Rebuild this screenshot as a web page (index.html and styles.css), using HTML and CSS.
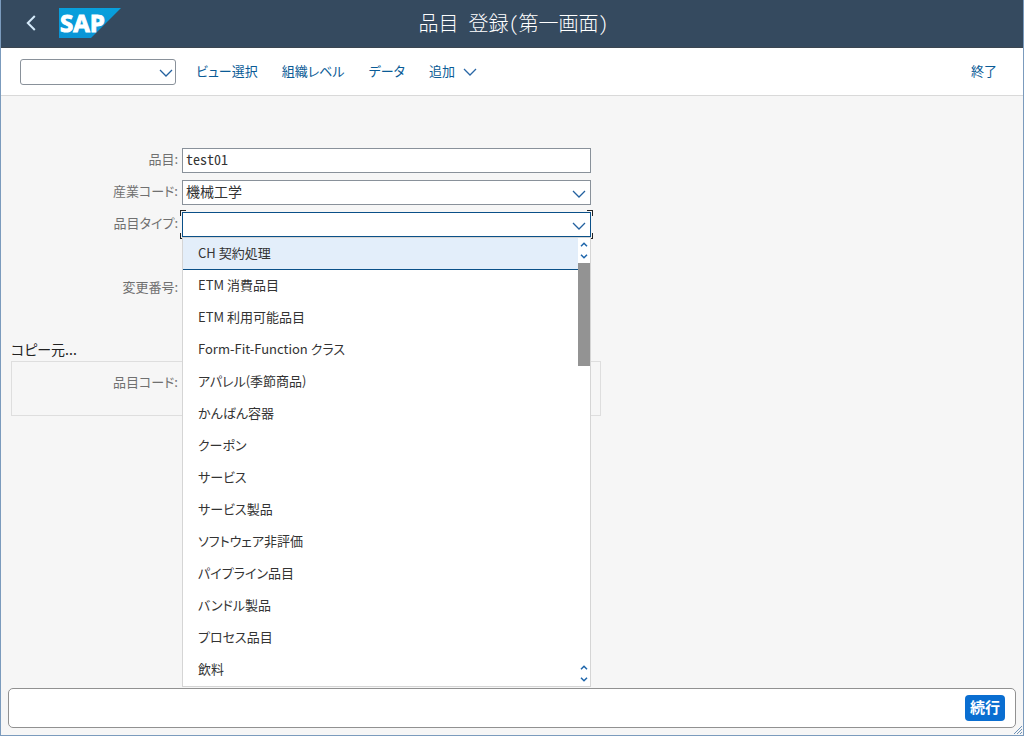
FILE: index.html
```html
<!DOCTYPE html>
<html lang="ja">
<head>
<meta charset="utf-8">
<meta name="viewport" content="width=device-width, initial-scale=1">
<title>品目 登録(第一画面)</title>
<link rel="stylesheet" href="styles.css">
</head>
<body>
<svg class="defs" aria-hidden="true">
  <symbol id="chevron-down" viewBox="0 0 14 8"><path d="M1 1L7 7L13 1"/></symbol>
  <symbol id="arrow-up" viewBox="0 0 8 5"><path d="M1 4.2L4 1.2L7 4.2"/></symbol>
  <symbol id="arrow-down" viewBox="0 0 8 5"><path d="M1 0.8L4 3.8L7 0.8"/></symbol>
</svg>
<header class="shell">
  <button class="back" type="button" aria-label="戻る">
    <svg width="10" height="16" viewBox="0 0 10 16"><path d="M8.8 1L1.8 8L8.8 15"/></svg>
  </button>
  <svg class="logo" width="62" height="30" viewBox="0 0 62 30" role="img" aria-label="SAP">
    <defs><linearGradient id="logo-fill" x1="0" y1="0" x2="0" y2="1"><stop offset="0" stop-color="#08a0dc"/><stop offset="1" stop-color="#0a94d6"/></linearGradient></defs>
    <path d="M0 0H62L32 30H0Z" fill="url(#logo-fill)"/>
    <text class="logo-text" x="1" y="24">SAP</text>
  </svg>
  <h1 class="title">品目 登録(第一画面)</h1>
</header>
<nav class="toolbar">
  <div class="combo command">
    <select class="field" aria-label="コマンド"><option></option></select>
    <svg class="chevron"><use href="#chevron-down"/></svg>
  </div>
  <button class="action" type="button">ビュー選択</button>
  <button class="action" type="button">組織レベル</button>
  <button class="action" type="button">データ</button>
  <button class="action" type="button">追加<svg class="menu-chevron"><use href="#chevron-down"/></svg></button>
  <button class="action exit" type="button">終了</button>
</nav>
<main class="content">
  <form class="form">
    <div class="row">
      <label class="label" for="material">品目:</label>
      <input class="field half" id="material" type="text" value="test01">
    </div>
    <div class="row">
      <label class="label" for="industry">産業コード:</label>
      <div class="combo">
        <select class="field" id="industry"><option>機械工学</option></select>
        <svg class="chevron"><use href="#chevron-down"/></svg>
      </div>
    </div>
    <div class="row">
      <label class="label" for="type">品目タイプ:</label>
      <div class="combo open">
        <select class="field" id="type"><option></option></select>
        <svg class="chevron"><use href="#chevron-down"/></svg>
        <div class="popup">
          <ul class="options" role="listbox" aria-label="品目タイプ">
            <li class="option selected" role="option" aria-selected="true">CH 契約処理</li>
            <li class="option" role="option">ETM 消費品目</li>
            <li class="option" role="option">ETM 利用可能品目</li>
            <li class="option" role="option">Form-Fit-Function クラス</li>
            <li class="option" role="option">アパレル(季節商品)</li>
            <li class="option" role="option">かんばん容器</li>
            <li class="option" role="option">クーポン</li>
            <li class="option" role="option">サービス</li>
            <li class="option" role="option">サービス製品</li>
            <li class="option" role="option">ソフトウェア非評価</li>
            <li class="option" role="option">パイプライン品目</li>
            <li class="option" role="option">バンドル製品</li>
            <li class="option" role="option">プロセス品目</li>
            <li class="option" role="option">飲料</li>
          </ul>
          <div class="scrollbar">
            <div class="arrows"><svg class="arrow"><use href="#arrow-up"/></svg><svg class="arrow"><use href="#arrow-down"/></svg></div>
            <div class="track"><div class="thumb"></div></div>
            <div class="arrows"><svg class="arrow"><use href="#arrow-up"/></svg><svg class="arrow"><use href="#arrow-down"/></svg></div>
          </div>
        </div>
      </div>
    </div>
    <div class="row spaced">
      <label class="label" for="change">変更番号:</label>
      <input class="field half" id="change" type="text">
    </div>
    <fieldset class="group">
      <legend class="group-title">コピー元...</legend>
      <div class="group-box">
        <div class="row">
          <label class="label" for="source">品目コード:</label>
          <input class="field half" id="source" type="text">
        </div>
      </div>
    </fieldset>
  </form>
</main>
<footer class="footer">
  <button class="continue" type="button">続行</button>
</footer>
<svg class="grip" width="8" height="8" viewBox="0 0 8 8" aria-hidden="true"><path d="M0 8L8 0M3 8L8 3M6 8L8 6"/></svg>
</body>
</html>
```

FILE: styles.css
```css
* { box-sizing: border-box; }

body {
  margin: 0;
  min-height: 100vh;
  display: flex;
  flex-direction: column;
  position: relative;
  background: #f6f6f6;
  color: #333;
  font: 400 13px/20px "Noto Sans CJK JP", sans-serif;
  font-feature-settings: "palt";
}

body::after {
  content: "";
  position: absolute;
  inset: 0;
  border: 1px solid #7b9bbd;
  border-top: 0;
  pointer-events: none;
}

button, input, select { font: inherit; font-feature-settings: inherit; color: inherit; }
svg { fill: none; }
.defs { position: absolute; width: 0; height: 0; }

.shell {
  display: grid;
  grid-template-columns: 24px 62px 1fr 118px;
  column-gap: 16px;
  align-items: center;
  height: 48px;
  padding: 0 0 2px 19px;
  background: #354a5f;
  border-bottom: 1px solid #3c4650;
}
.back { display: flex; justify-content: center; padding: 0; border: 0; background: none; }
.back svg { stroke: #d5eafa; stroke-width: 2; }
.logo { display: block; overflow: visible; }
.logo-text { fill: #fff; stroke: #fff; stroke-width: 1; font: 700 24px "Open Sans", sans-serif; }
.title { margin: 0; text-align: center; color: #fff; font-size: 20px; font-weight: 300; line-height: 28px; font-feature-settings: "hwid"; }

.toolbar {
  display: flex;
  align-items: center;
  gap: 24px;
  height: 48px;
  padding: 0 27px 0 20px;
  background: #fff;
  border-bottom: 1px solid #d9d9d9;
}
.action { display: flex; align-items: center; gap: 8px; padding: 0 0 2px; border: 0; background: none; color: #0a5b96; white-space: nowrap; }
.command { width: 156px; margin-right: -4px; }
.command .field { height: 26px; border-radius: 3px; }
.menu-chevron { width: 14px; height: 8px; margin-top: 2px; stroke: #2a67a5; stroke-width: 1.3; }
.exit { margin-left: auto; }

.content { flex: 1; padding: 52px 11px 0; }
.form { max-width: 590px; display: grid; gap: 7px; }
.row { display: grid; grid-template-columns: 167px minmax(0, 409px); column-gap: 4px; align-items: center; }
.spaced { margin-top: 32px; }
.label { padding-bottom: 3px; text-align: right; color: #707070; white-space: nowrap; }
.field {
  display: block;
  width: 100%;
  height: 25px;
  padding: 0 3px 3px;
  border: 1px solid #89919a;
  border-radius: 0;
  background: #fff;
  outline: 0;
  font-size: 14px;
  appearance: none;
}
.half { font-feature-settings: "hwid"; }
.combo { position: relative; }
.chevron { position: absolute; right: 5px; top: 10px; width: 14px; height: 8px; stroke: #23619f; stroke-width: 1.3; pointer-events: none; }
.command .chevron { right: 3px; }

.open .field { position: relative; border-color: #0a5088; }
.open::before {
  --ink: linear-gradient(#222, #222);
  content: "";
  position: absolute;
  inset: -2px;
  background:
    var(--ink) 0 0 / 6px 1px, var(--ink) 0 0 / 1px 6px,
    var(--ink) 100% 0 / 6px 1px, var(--ink) 100% 0 / 1px 6px,
    var(--ink) 0 100% / 6px 1px, var(--ink) 0 100% / 1px 6px,
    var(--ink) 100% 100% / 6px 1px, var(--ink) 100% 100% / 1px 6px;
  background-repeat: no-repeat;
}
.popup {
  position: absolute;
  z-index: 2;
  top: 100%;
  left: 0;
  right: 0;
  display: flex;
  background: #fff;
  border: 1px solid #d5d5d5;
}
.options { flex: 1; margin: 0; padding: 0; list-style: none; }
.option { height: 32px; padding: 0 15px; line-height: 30px; white-space: nowrap; }
.selected { background: #e3eefa; border-bottom: 1px solid #0a5088; }
.scrollbar { width: 12px; display: flex; flex-direction: column; }
.arrows { display: flex; flex-direction: column; align-items: center; justify-content: space-between; height: 25px; padding: 4px 0; }
.arrow { width: 8px; height: 5px; stroke: #1f66ab; stroke-width: 1.5; }
.track { flex: 1; }
.thumb { height: 26%; background: #939393; }

.group { min-width: 0; margin: 31px 0 0; padding: 0; border: 0; }
.group-title { padding: 0; margin-bottom: 2px; color: #222; font-size: 14px; }
.group-box { padding: 9px 0 19px; border: 1px solid #dedede; }
.group-box .row { grid-template-columns: 166px minmax(0, 409px); }

.footer {
  display: flex;
  justify-content: flex-end;
  align-items: center;
  height: 40px;
  margin: 0 8px 8px;
  padding-right: 10px;
  background: #fff;
  border: 1px solid #919191;
  border-radius: 5px;
}
.continue { height: 26px; padding: 0 5px 2px; border: 0; border-radius: 4px; background: #0a6ed1; color: #fff; font-weight: 700; font-size: 15px; line-height: 24px; }
.grip { position: absolute; right: 2px; bottom: 2px; stroke: #6f93b8; }
```
